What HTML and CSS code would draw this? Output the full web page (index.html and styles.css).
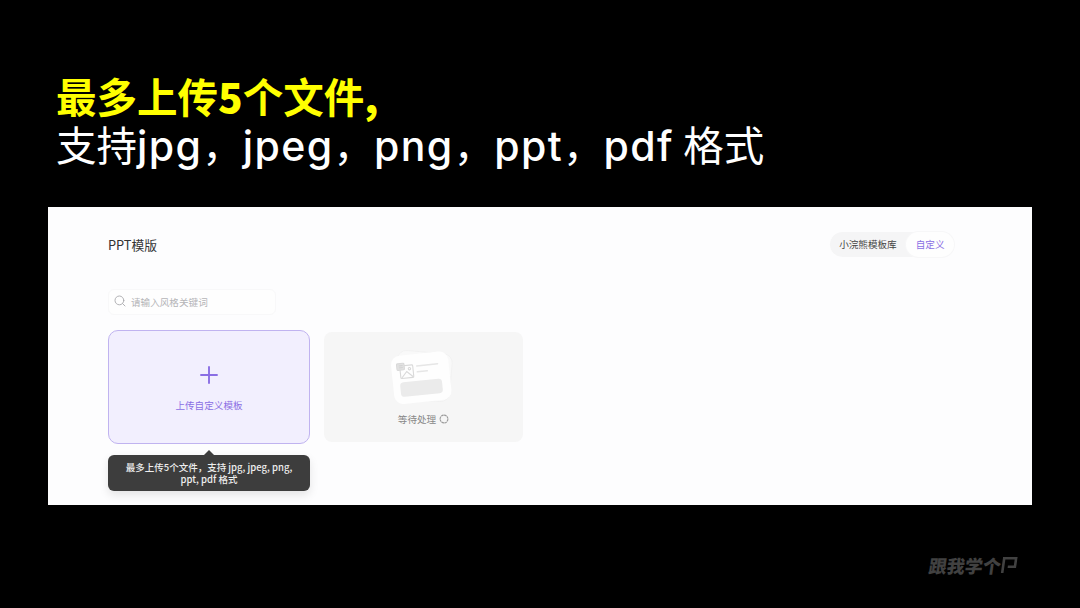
FILE: index.html
```
<!DOCTYPE html>
<html lang="zh-CN">
<head>
    <meta charset="UTF-8">
    <meta name="viewport" content="width=device-width, initial-scale=1.0">
    <title>PPT模版</title>
    <link rel="stylesheet" href="styles.css">
</head>
<body>
    <div class="slide">
        <h1 class="headline">
            <span class="headline-strong">最多上传<b>5</b>个文件<b>,</b></span>
            <span class="headline-sub">支持<b>jpg</b>，<b>jpeg</b>，<b>png</b>，<b>ppt</b>，<b>pdf</b> 格式</span>
        </h1>

        <div class="panel">
            <div class="panel-header">
                <h2>PPT模版</h2>
                <div class="tabs">
                    <span class="tab">小浣熊模板库</span>
                    <span class="tab active">自定义</span>
                </div>
            </div>

            <div class="search">
                <svg width="12" height="12" viewBox="0 0 12 12" fill="none" stroke="#a9a9ad" stroke-width="0.9" stroke-linecap="round">
                    <circle cx="5.4" cy="5.4" r="4.4"/>
                    <path d="M8.6 8.6L11 11"/>
                </svg>
                <span>请输入风格关键词</span>
            </div>

            <div class="cards">
                <div class="upload-card">
                    <svg width="18" height="18" viewBox="0 0 18 18" fill="none" stroke="#8a6ee4" stroke-width="1.9" stroke-linecap="round">
                        <path d="M9 1v16M1 9h16"/>
                    </svg>
                    <span>上传自定义模板</span>
                    <div class="tooltip">最多上传5个文件，支持 jpg, jpeg, png,<br>ppt, pdf 格式</div>
                </div>
                <div class="waiting-card">
                    <svg width="66" height="60" viewBox="0 0 66 60" fill="none">
                        <rect x="7" y="5" width="55" height="48" rx="9" fill="#f9f9f9" stroke="#f0f0f0" stroke-width="0.8" transform="rotate(5 34 29)"/>
                        <g transform="rotate(-6 32 31)">
                            <rect x="3.5" y="6.5" width="57.5" height="48.5" rx="9" fill="#fefefe"/>
                            <g stroke="#d9d9d9" stroke-width="1.1">
                                <rect x="12" y="17" width="13" height="12.5" rx="1"/>
                                <path d="M13 29l5.5-6 6 6"/>
                                <circle cx="21.5" cy="20.5" r="1.2"/>
                                <rect x="9" y="14.5" width="7.5" height="6.5" rx="1" fill="#e2e2e2"/>
                            </g>
                            <path d="M11 16.7h4M11 18.7h4" stroke="#c8c8c8" stroke-width="0.6"/>
                            <path d="M29 18.5h21M29 24.5h10" stroke="#e6e6e6" stroke-width="1.5" stroke-linecap="round"/>
                            <rect x="10.5" y="33.5" width="42" height="14.5" rx="3.5" fill="#ebebeb"/>
                        </g>
                    </svg>
                    <div class="status">
                        <span>等待处理</span>
                        <svg width="10" height="10" viewBox="0 0 10 10" fill="none" stroke="#9b9b9b" stroke-width="1.1">
                            <circle cx="5" cy="5" r="3.9" stroke-dasharray="2.6 0.4"/>
                        </svg>
                    </div>
                </div>
            </div>
        </div>

        <div class="watermark">
            <span>跟我学个</span>
            <svg width="16" height="18" viewBox="0 0 16 18" fill="none" stroke="#414141" stroke-width="2.6">
                <path d="M2.3 17V2.3H14.2V10.8H7"/>
            </svg>
        </div>
    </div>
</body>
</html>
```

FILE: styles.css
```
* {
    box-sizing: border-box;
}

body {
    margin: 0;
    background-color: #000;
    font-family: "Noto Sans CJK SC", sans-serif;
}

.slide {
    position: relative;
    width: 1080px;
    height: 608px;
    padding: 74px 48px 0;
    overflow: hidden;
    background-color: #000;
}

.headline {
    height: 133px;
    margin: 0;
    padding-left: 8px;
    font-family: Inter, "Noto Sans CJK SC", sans-serif;
    font-size: 40.5px;
    line-height: 49px;
    white-space: nowrap;
}

.headline span {
    display: block;
}

.headline-strong {
    height: 48px;
    color: #ffff00;
    font-weight: 700;
}

.headline-strong b {
    font-family: "Noto Sans CJK SC", sans-serif;
    line-height: 1;
}

.headline-sub {
    color: #fff;
    font-weight: 400;
    word-spacing: -2px;
}

.headline-sub b {
    font-size: 41px;
    font-weight: 500;
    letter-spacing: 1.4px;
}

.panel {
    height: 298px;
    padding: 24px 78px 0 60px;
    background-color: #fdfdfe;
}

.panel-header {
    display: flex;
    justify-content: space-between;
    align-items: center;
    height: 27px;
}

.panel-header h2 {
    margin: 0;
    color: #333;
    font-size: 12.8px;
    font-weight: 400;
}

.tabs {
    display: flex;
    align-items: center;
    height: 25px;
    border-radius: 13px;
    background-color: #f5f5f6;
    font-size: 9.6px;
}

.tab {
    height: 25px;
    padding: 0 9.5px;
    color: #444;
    line-height: 25px;
}

.tab.active {
    border-radius: 13px;
    background-color: #fefefe;
    box-shadow: 0 0 0 1px #f7f7f8;
    color: #8a6ee4;
}

.search {
    display: flex;
    align-items: center;
    gap: 5px;
    width: 168px;
    height: 26px;
    margin-top: 31px;
    padding-left: 5px;
    border: 1px solid #f8f8f9;
    border-radius: 6px;
    background-color: #fefefe;
    color: #b5b5b8;
    font-size: 9.6px;
}

.search svg {
    margin-top: -2px;
}

.cards {
    display: flex;
    align-items: center;
    gap: 14px;
    margin-top: 15px;
}

.upload-card {
    position: relative;
    display: flex;
    flex-direction: column;
    align-items: center;
    width: 202px;
    height: 114px;
    padding-top: 35px;
    border: 1px solid #c0b3f0;
    border-radius: 10px;
    background-color: #f2effe;
    color: #8a6ee4;
    font-size: 9.6px;
}

.upload-card > span {
    margin-top: 14px;
    line-height: 14px;
}

.tooltip {
    position: absolute;
    top: 124px;
    left: -1px;
    width: 202px;
    height: 36px;
    padding-top: 6px;
    border-radius: 6px;
    background-color: #3d3d3d;
    box-shadow: 0 4px 10px rgba(0, 0, 0, 0.1);
    color: #eee;
    font-size: 9.5px;
    font-weight: 500;
    line-height: 12px;
    text-align: center;
}

.tooltip::before {
    content: "";
    position: absolute;
    top: -5px;
    left: 96px;
    border: 5px solid transparent;
    border-top: 0;
    border-bottom-color: #3d3d3d;
}

.waiting-card {
    display: flex;
    flex-direction: column;
    align-items: center;
    width: 199px;
    height: 110px;
    padding: 15px 4px 0 0;
    border-radius: 8px;
    background-color: #f6f6f6;
}

.status {
    display: flex;
    align-items: center;
    gap: 3px;
    margin: 5px 0 0 4px;
    color: #888;
    font-size: 9.6px;
    line-height: 14px;
}

.watermark {
    position: absolute;
    top: 552px;
    left: 929px;
    display: flex;
    align-items: center;
    color: #414141;
    font-size: 18px;
    font-weight: 900;
    line-height: 26px;
    transform: skewX(-8deg);
}
```
